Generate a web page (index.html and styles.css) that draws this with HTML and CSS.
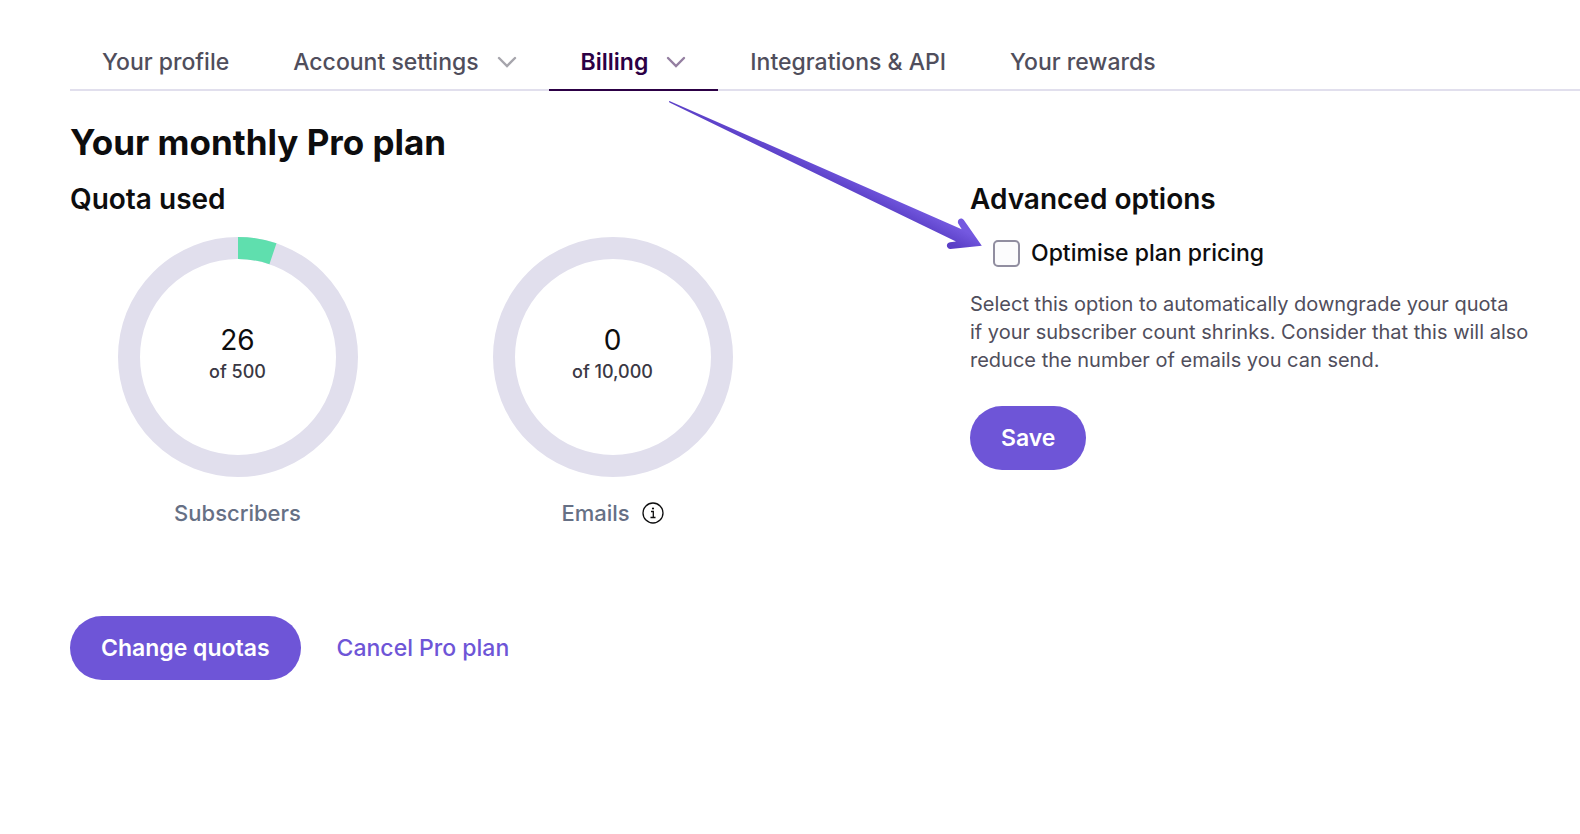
FILE: index.html
```
<!DOCTYPE html>
<html lang="en">
<head>
    <meta charset="UTF-8">
    <meta name="viewport" content="width=device-width, initial-scale=1.0">
    <title>Billing</title>
    <link rel="stylesheet" href="styles.css">
</head>
<body>
    <nav class="tabs">
        <a href="#profile" class="tab">Your profile</a>
        <a href="#settings" class="tab">Account settings
            <svg class="chevron" viewBox="0 0 20 12" aria-hidden="true"><path d="M2 2l8 8 8-8"/></svg>
        </a>
        <a href="#billing" class="tab active">Billing
            <svg class="chevron" viewBox="0 0 20 12" aria-hidden="true"><path d="M2 2l8 8 8-8"/></svg>
        </a>
        <a href="#api" class="tab">Integrations &amp; API</a>
        <a href="#rewards" class="tab">Your rewards</a>
    </nav>

    <main>
        <h1>Your monthly Pro plan</h1>
        <div class="columns">
            <section>
                <h2>Quota used</h2>
                <div class="quotas">
                    <div class="quota">
                        <div class="ring">
                            <svg viewBox="0 0 240 240" aria-hidden="true">
                                <circle class="track" cx="120" cy="120" r="109"/>
                                <circle class="used" cx="120" cy="120" r="109" pathLength="500" stroke-dasharray="26 500" transform="rotate(-90 120 120)"/>
                            </svg>
                            <div class="amount">
                                <span class="count">26</span>
                                <span class="total">of 500</span>
                            </div>
                        </div>
                        <p class="quota-name">Subscribers</p>
                    </div>
                    <div class="quota">
                        <div class="ring">
                            <svg viewBox="0 0 240 240" aria-hidden="true">
                                <circle class="track" cx="120" cy="120" r="109"/>
                            </svg>
                            <div class="amount">
                                <span class="count">0</span>
                                <span class="total">of 10,000</span>
                            </div>
                        </div>
                        <p class="quota-name">Emails
                            <svg class="info" viewBox="0 0 22 22" aria-hidden="true">
                                <circle cx="11" cy="11" r="10"/>
                                <path d="M9 9.500h2.300V15.500M8.500 15.500h5"/>
                                <circle class="dot" cx="11" cy="6.500" r="1.100"/>
                            </svg>
                        </p>
                    </div>
                </div>
                <div class="actions">
                    <button type="button" class="btn">Change quotas</button>
                    <a href="#cancel" class="cancel">Cancel Pro plan</a>
                </div>
            </section>

            <form class="options">
                <h2>Advanced options</h2>
                <div class="check">
                    <input type="checkbox" id="optimise">
                    <label for="optimise">Optimise plan pricing</label>
                </div>
                <p class="hint">Select this option to automatically downgrade your quota<br>
                    if your subscriber count shrinks. Consider that this will also reduce the number of emails you can send.</p>
                <button type="button" class="btn">Save</button>
            </form>
        </div>
    </main>

    <!-- pointer from the Billing tab to the checkbox -->
    <svg class="arrow" viewBox="0 0 316 150" aria-hidden="true">
        <defs>
            <linearGradient id="arrowFill" gradientUnits="userSpaceOnUse" x1="251" y1="108" x2="243" y2="124">
                <stop offset="0" stop-color="#7459e0"/>
                <stop offset="1" stop-color="#5a3fc6"/>
            </linearGradient>
        </defs>
        <path fill="url(#arrowFill)" d="M1 1.800Q1 .8 2 1.200L293.700 129.300L290.200 123.500C288.500 119.500 293.500 116.500 296 120.300L313.800 145.700L282.500 149C278 149 277.500 142.800 282 142.300L288 141.500L1.500 2.600Z"/>
    </svg>
</body>
</html>
```
FILE: styles.css
```
*{
    margin: 0;
    padding: 0;
    box-sizing: border-box;
}
body{
    position: relative;
    padding: 20px 0 40px 70px;
    background-color: #fff;
    color: #0d0d0e;
    font-family: Inter, "Open Sans", sans-serif;
    font-size: 23px;
    line-height: 28px;
}

/* tabs */
.tabs{
    display: flex;
    box-shadow: inset 0 -2px #e1dfed;
}
.tab{
    display: flex;
    align-items: center;
    gap: 18px;
    padding: 28px 32px 13px;
    border-bottom: 2px solid transparent;
    color: #504e5c;
    font-weight: 500;
    text-decoration: none;
    white-space: nowrap;
}
.tab.active{
    color: #2c0045;
    border-color: #2c0045;
    font-weight: 600;
}
.chevron{
    width: 20px;
    height: 12px;
    fill: none;
    stroke: currentColor;
    stroke-width: 2.4;
    stroke-linecap: round;
    opacity: 0.5;
}

/* plan */
h1{
    margin-top: 31px;
    font-size: 35px;
    line-height: 40px;
    font-weight: 700;
}
h2{
    font-size: 28px;
    line-height: 36px;
    font-weight: 600;
}
.columns{
    display: grid;
    grid-template-columns: 3fr 2fr;
    margin-top: 19px;
    padding-right: 10px;
}
.quotas{
    display: grid;
    grid-template-columns: 1fr 1fr;
    gap: 40px;
    max-width: 710px;
    margin-top: 20px;
}
.quota{
    display: flex;
    flex-direction: column;
    align-items: center;
}
.ring{
    display: grid;
    place-items: center;
    width: 240px;
    height: 240px;
}
.ring > *{
    grid-area: 1 / 1;
}
.ring circle{
    fill: none;
    stroke-width: 22;
}
.track{
    stroke: #e1dfed;
}
.used{
    stroke: #5fdfae;
}
.amount{
    display: flex;
    flex-direction: column;
    align-items: center;
    padding-bottom: 6px;
}
.count{
    font-size: 28px;
    line-height: 36px;
}
.total{
    color: #3a3844;
    font-size: 18px;
    font-weight: 500;
}
.quota-name{
    display: flex;
    align-items: center;
    gap: 12px;
    margin-top: 22px;
    color: #667085;
    font-size: 22px;
    font-weight: 500;
}
.info{
    width: 22px;
    height: 22px;
    fill: none;
    stroke: #0d0d0e;
    stroke-width: 1.3;
}
.info .dot{
    fill: #0d0d0e;
    stroke: none;
}
.actions{
    display: flex;
    align-items: center;
    gap: 36px;
    margin-top: 89px;
}
.btn{
    height: 64px;
    padding: 0 31px;
    border: none;
    border-radius: 32px;
    background-color: #6e55d7;
    color: #fff;
    font: inherit;
    font-weight: 600;
    cursor: pointer;
}
.cancel{
    color: #6e55d7;
    font-weight: 500;
    text-decoration: none;
}

/* advanced options */
.check{
    display: flex;
    align-items: center;
    gap: 11px;
    margin-top: 20px;
    padding-left: 23px;
    line-height: 32px;
    font-weight: 500;
}
.check input{
    appearance: none;
    width: 27px;
    height: 27px;
    border: 2px solid #918ea0;
    border-radius: 5px;
    background-color: #fcfcfd;
}
.check input:checked{
    background-color: #6e55d7;
}
.hint{
    max-width: 580px;
    margin: 21px 0 32px;
    color: #504e5c;
    font-size: 20px;
}

.arrow{
    position: absolute;
    top: 100px;
    left: 668px;
    width: 316px;
    height: 150px;
    pointer-events: none;
}
```
